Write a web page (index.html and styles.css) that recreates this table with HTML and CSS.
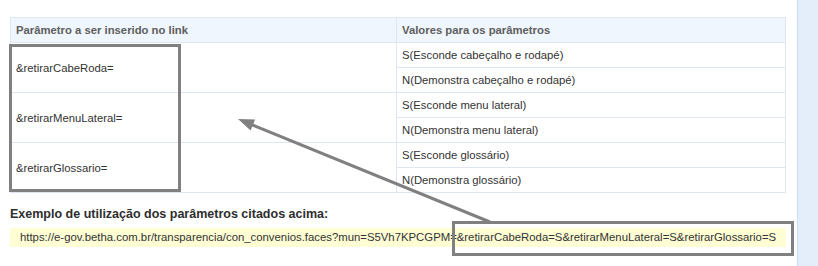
FILE: index.html
```html
<!DOCTYPE html>
<html lang="pt-BR">
<head>
<meta charset="UTF-8">
<meta name="viewport" content="width=device-width, initial-scale=1.0">
<title>Parâmetros do link</title>
<link rel="stylesheet" href="styles.css">
</head>
<body>
<div class="page">
    <div class="conteudo">
        <table class="parametros">
            <tr>
                <th class="col-param">Parâmetro a ser inserido no link</th>
                <th>Valores para os parâmetros</th>
            </tr>
            <tr>
                <td rowspan="2">&amp;retirarCabeRoda=</td>
                <td>S(Esconde cabeçalho e rodapé)</td>
            </tr>
            <tr>
                <td>N(Demonstra cabeçalho e rodapé)</td>
            </tr>
            <tr>
                <td rowspan="2">&amp;retirarMenuLateral=</td>
                <td>S(Esconde menu lateral)</td>
            </tr>
            <tr>
                <td>N(Demonstra menu lateral)</td>
            </tr>
            <tr>
                <td rowspan="2">&amp;retirarGlossario=</td>
                <td>S(Esconde glossário)</td>
            </tr>
            <tr>
                <td>N(Demonstra glossário)</td>
            </tr>
        </table>

        <h3 class="exemplo-titulo">Exemplo de utilização dos parâmetros citados acima:</h3>
        <div class="exemplo-link">https://e-gov.betha.com.br/transparencia/con_convenios.faces?mun=S5Vh7KPCGPM=&amp;retirarCabeRoda=S&amp;retirarMenuLateral=S&amp;retirarGlossario=S</div>
    </div>
    <div class="lateral"></div>

    <!-- marcações em cinza por cima da tabela e do link -->
    <svg class="marcacoes" width="818" height="266" viewBox="0 0 818 266">
        <rect x="10.5" y="45.5" width="169" height="145" />
        <rect x="453.5" y="222.5" width="339" height="32" />
        <line x1="490" y1="222" x2="250" y2="124" />
        <polygon class="seta" points="238,119 250.6,130.6 255.1,119.5" />
    </svg>
</div>
</body>
</html>
```

FILE: styles.css
```css
/* Layout da página de parâmetros */
body {
    margin: 0;
    font-family: "Liberation Sans", Arial, sans-serif;
    background-color: #ffffff;
    color: #333333;
}
.page {
    position: relative;
    display: flex;
    height: 266px;
    overflow: hidden;
}
.conteudo {
    flex: 1;
    padding: 17px 11px 0 10px;
}
.lateral {
    width: 20px;
    border-left: 1px solid #cfdcef;
    background-color: #e4eefb;
}
.parametros {
    width: 100%;
    border-collapse: collapse;
    font-size: 11.3px;
}
.parametros th, .parametros td {
    height: 24px;
    padding: 0 5px;
    text-align: left;
    border: 1px solid #dde6f1;
}
.parametros th {
    background-color: #eff6fd;
    color: #5e5e5e;
    font-weight: bold;
}
.parametros td {
    color: #333333;
}
.parametros .col-param {
    width: 375px;
}
.exemplo-titulo {
    margin: 13px 0 6px 0;
    font-size: 12.5px;
    line-height: 16px;
    font-weight: bold;
    color: #2e2e2e;
}
.exemplo-link {
    background-color: #fefdd3;
    font-size: 11.35px;
    line-height: 19px;
    padding-left: 10px;
    color: #333333;
    white-space: nowrap;
}
.marcacoes {
    position: absolute;
    left: 0;
    top: 0;
    pointer-events: none;
}
.marcacoes rect, .marcacoes line {
    fill: none;
    stroke: #808080;
    stroke-width: 3;
}
.marcacoes .seta {
    fill: #808080;
}
```
